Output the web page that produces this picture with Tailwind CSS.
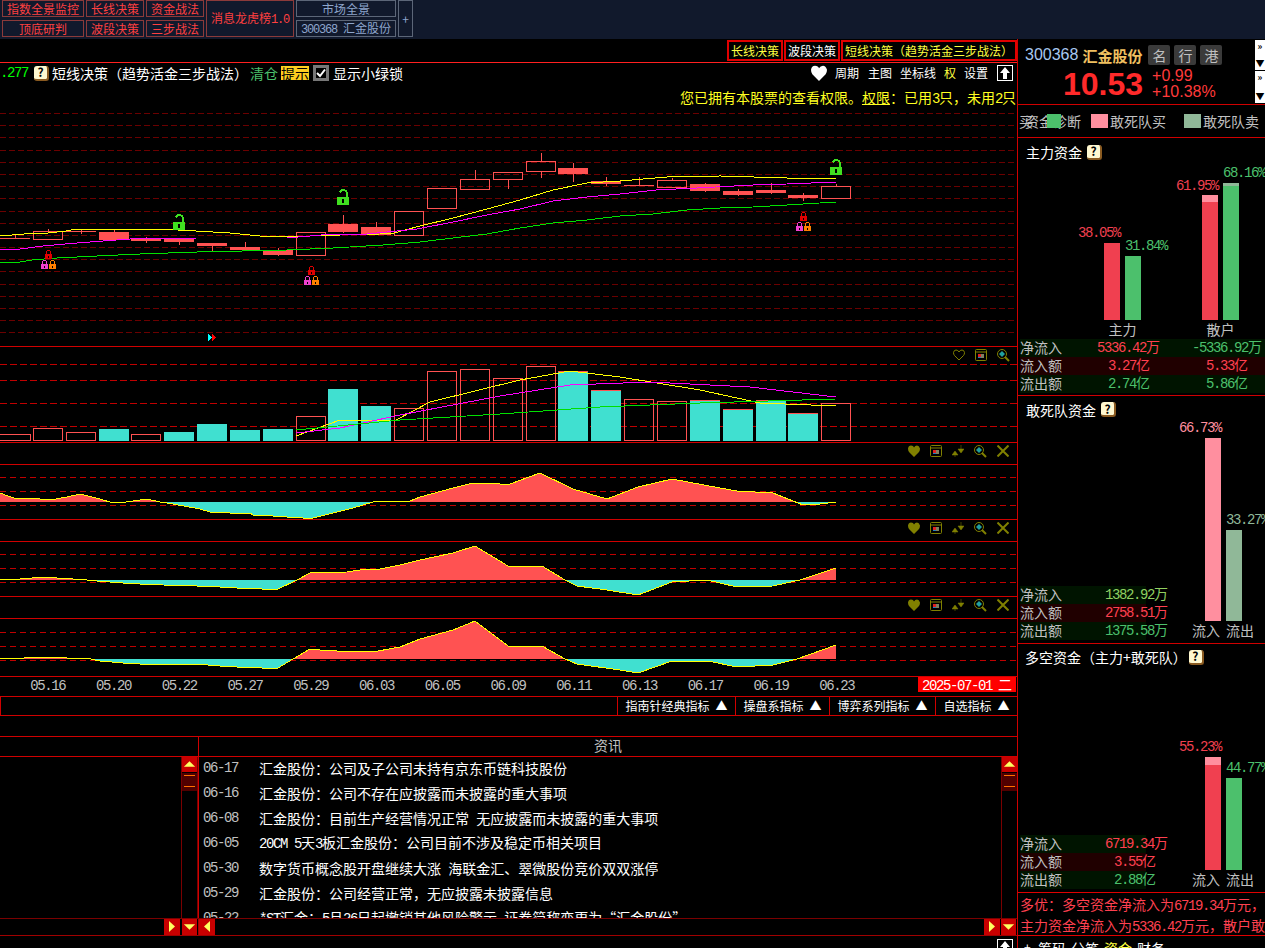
<!DOCTYPE html>
<html lang="zh">
<head>
<meta charset="utf-8">
<title>短线决策</title>
<script src="https://cdn.jsdelivr.net/npm/@tailwindcss/browser@4"></script>
</head>
<body class="bg-black">
<svg width="0" height="0" class="absolute">
  <defs>
    <symbol id="lock" viewBox="0 0 7 9"><path d="M1.5 4V2.2Q1.5 .5 3.5 .5T5.5 2.2V4" fill="none" stroke="currentColor"/><rect x="0" y="4" width="7" height="5" fill="currentColor"/><rect x="3" y="5.5" width="1" height="2" fill="#000"/></symbol>
    <symbol id="open" viewBox="0 0 12 17"><path d="M3 3.5Q4 1 6.5 1T10 4V8" fill="none" stroke="#40e020" stroke-width="2"/><rect x="0" y="8" width="12" height="8" fill="#40e020"/><rect x="5" y="10" width="2" height="4" fill="#000"/></symbol>
    <symbol id="heart" viewBox="0 0 12 12"><path d="M6 12L1 7Q0 5.500 0 3.500Q.5 .5 3 .5T6 2.500Q7 .5 9 .5T12 3.500Q12 5.500 11 7Z" fill="#808000"/></symbol>
    <symbol id="heart-o" viewBox="0 0 12 12"><path d="M6 11L1.500 6.500Q.5 5.500 .5 3.500Q1 1 3 1T6 3Q7 1 9 1T11.500 3.500Q11.500 5.500 10.500 6.500Z" fill="none" stroke="#808000"/></symbol>
    <symbol id="win" viewBox="0 0 12 12"><rect x=".5" y=".5" width="11" height="11" rx="1" fill="none" stroke="#808000"/><path d="M1 3H11" stroke="#808000"/><rect x="3" y="5" width="3" height="4" fill="#e02020"/><rect x="6" y="5" width="3" height="4" fill="#808060"/><rect x="3" y="8" width="3" height="1" fill="#2080c0"/></symbol>
    <symbol id="pin" viewBox="0 0 12 12"><path d="M0 10H6L3 6ZM3 10V12" fill="#808000" stroke="#808000" stroke-width=".5"/><path d="M6 4H12L9 8ZM9 4V0" fill="#808000" stroke="#808000" stroke-width=".5"/></symbol>
    <symbol id="mag" viewBox="0 0 13 13"><circle cx="5" cy="5" r="4.500" fill="none" stroke="#808000"/><path d="M5 2L8 5L5 8L2 5Z" fill="#20a0a0"/><path d="M8 8L12 12" stroke="#808000" stroke-width="2"/></symbol>
    <symbol id="x" viewBox="0 0 12 12"><path d="M.5 .5L11.500 11.500M11.500 .5L.5 11.500" stroke="#808000" stroke-width="2"/></symbol>
    <symbol id="tri-u" viewBox="0 0 16 15"><path d="M2 10L8 4L14 10Z" fill="#ffff60"/></symbol>
    <symbol id="tri-d" viewBox="0 0 16 15"><path d="M2 5L8 11L14 5Z" fill="#ffff60"/></symbol>
    <symbol id="tri-r" viewBox="0 0 16 15"><path d="M5 2L11 7.500L5 13Z" fill="#ffff60"/></symbol>
    <symbol id="tri-l" viewBox="0 0 16 15"><path d="M11 2L5 7.500L11 13Z" fill="#ffff60"/></symbol>
  </defs>
</svg>

<div class="w-[1265px] h-[948px] overflow-hidden flex flex-col bg-black font-['Noto_Sans_CJK_SC',sans-serif] text-[14px] leading-none text-white">

  <!-- top bar -->
  <div class="h-[39px] shrink-0 bg-[#11192c] pl-[2px] grid grid-cols-[82px_58px_58px_88px_100px_15px] grid-rows-[17px_17px] gap-x-[2px] gap-y-[3px] text-[12px] justify-start">
    <div class="border border-[#8c3a3a] flex items-center justify-center text-[#ff4040]">指数全景监控</div>
    <div class="border border-[#8c3a3a] flex items-center justify-center text-[#ff4040]">长线决策</div>
    <div class="border border-[#8c3a3a] flex items-center justify-center text-[#ff4040]">资金战法</div>
    <div class="row-span-2 border border-[#8c3a3a] flex items-center justify-center text-[#ff4040]"><span>消息龙虎榜<span class="font-['Liberation_Mono'] tracking-[-1.2px]">1.0</span></span></div>
    <div class="border border-[#5c6678] flex items-center justify-center text-[#8ea6cc]">市场全景</div>
    <div class="row-span-2 border border-[#5c6678] flex items-center justify-center text-[#8ea6cc]">+</div>
    <div class="border border-[#8c3a3a] flex items-center justify-center text-[#ff4040]">顶底研判</div>
    <div class="border border-[#8c3a3a] flex items-center justify-center text-[#ff4040]">波段决策</div>
    <div class="border border-[#8c3a3a] flex items-center justify-center text-[#ff4040]">三步战法</div>
    <div class="border border-[#5c6678] flex items-center justify-center text-[#8ea6cc]"><span><span class="font-['Liberation_Mono'] tracking-[-1.2px] mr-[6px]">300368</span>汇金股份</span></div>
  </div>

  <div class="flex h-[909px] shrink-0">
    <!-- left column -->
    <div class="w-[1018px] shrink-0 border-r border-[#d00000] flex flex-col">

      <div class="h-[24px] shrink-0 border-b border-[#ff2020] flex justify-end items-start pt-[1px] text-[12px]">
        <div class="h-[21px] w-[56px] border-2 border-[#e00000] flex items-center justify-center text-[#ffff40]">长线决策</div>
        <div class="h-[21px] w-[56px] ml-[1px] border-2 border-[#e00000] flex items-center justify-center text-white">波段决策</div>
        <div class="h-[21px] w-[176px] ml-[1px] border-2 border-[#e00000] flex items-center justify-center text-[#ffff40]">短线决策（趋势活金三步战法）</div>
      </div>

      <!-- main chart -->
      <div class="relative h-[284px] shrink-0 border-b border-[#d00000]">
        <svg class="absolute top-0 left-0" width="1017" height="283" viewBox="0 63 1017 283" fill="none" shape-rendering="crispEdges">
          <path d="M0 113.500H1017M0 125.500H1017M0 137.500H1017M0 150.500H1017M0 162.500H1017M0 174.500H1017M0 186.500H1017M0 198.500H1017M0 211.500H1017M0 223.500H1017M0 235.500H1017M0 247.500H1017M0 259.500H1017M0 271.500H1017M0 284.500H1017M0 296.500H1017M0 308.500H1017M0 320.500H1017M0 332.500H1017" stroke="#6a0000" stroke-dasharray="6 3"/>
          <g stroke="#ff5252">
            <path d="M15.500 234V238M48.500 229V231M81.500 229V234M114.500 229V241M146.500 237V243M179.500 239V245M212.500 243V252M245.500 242V251M278.500 248V256M343.500 215V233M376.500 222V235M475.500 170V179M508.500 179V189M541.500 153V161M541.500 171V178M573.500 163V182M606.500 177V186M639.500 177V185M672.500 178V180M705.500 183V192M738.500 189V196M771.500 183V194M803.500 193V201M836.500 184V186"/>
            <path d="M0 238.500H30M66 231.500H96M624 185.500H654"/>
            <rect x="33.500" y="231.500" width="29" height="8"/>
            <rect x="296.500" y="232.500" width="29" height="23"/>
            <rect x="394.500" y="211.500" width="29" height="24"/>
            <rect x="427.500" y="188.500" width="29" height="20"/>
            <rect x="460.500" y="179.500" width="29" height="10"/>
            <rect x="493.500" y="172.500" width="29" height="7"/>
            <rect x="526.500" y="161.500" width="29" height="10"/>
            <rect x="657.500" y="180.500" width="29" height="7"/>
            <rect x="821.500" y="186.500" width="29" height="12"/>
          </g>
          <g fill="#ff5252">
            <rect x="99" y="232" width="30" height="8"/>
            <rect x="131" y="239" width="30" height="2"/>
            <rect x="164" y="239" width="30" height="3"/>
            <rect x="197" y="243" width="30" height="3"/>
            <rect x="230" y="247" width="30" height="3"/>
            <rect x="263" y="250" width="30" height="5"/>
            <rect x="328" y="224" width="30" height="8"/>
            <rect x="361" y="227" width="30" height="8"/>
            <rect x="558" y="168" width="30" height="6"/>
            <rect x="591" y="181" width="30" height="3"/>
            <rect x="690" y="184" width="30" height="7"/>
            <rect x="723" y="191" width="30" height="4"/>
            <rect x="756" y="190" width="30" height="3"/>
            <rect x="788" y="195" width="30" height="3"/>
          </g>
          <polyline points="0,236 24,234 48,233 66,231 76,229 160,229 196,231 230,233 260,236 285,237 310,236 340,235 380,234 394,233 420,226 453,218 487,209 520,200 553,190 587,183 620,181 667,177 720,176 787,178 836,178" stroke="#ffff00"/>
          <polyline points="0,250 20,249 43,246 65,244 90,242 130,239 197,238 287,238 333,234 367,234 417,229 453,222 487,215 520,209 553,201 587,197 620,194 656,190 697,188 753,185 787,184 836,182" stroke="#ff00ff"/>
          <polyline points="0,262 20,262 32,260 57,258 97,256 140,254 197,252 287,250 333,248 383,245 420,242 453,238 487,234 520,228 553,223 587,220 620,216 653,214 687,210 720,208 753,207 787,205 836,202" stroke="#00e000"/>
          <use href="#open" x="173" y="214" width="12" height="17"/>
          <use href="#open" x="337" y="189" width="12" height="17"/>
          <use href="#open" x="830" y="159" width="12" height="17"/>
          <use href="#lock" x="45" y="250" width="7" height="9" color="#e00000"/>
          <use href="#lock" x="41" y="260" width="7" height="9" color="#f040d0"/>
          <use href="#lock" x="49" y="260" width="7" height="9" color="#ff8000"/>
          <use href="#lock" x="308" y="266" width="7" height="9" color="#e00000"/>
          <use href="#lock" x="304" y="276" width="7" height="9" color="#f040d0"/>
          <use href="#lock" x="312" y="276" width="7" height="9" color="#ff8000"/>
          <use href="#lock" x="800" y="212" width="7" height="9" color="#e00000"/>
          <use href="#lock" x="796" y="222" width="7" height="9" color="#f040d0"/>
          <use href="#lock" x="804" y="222" width="7" height="9" color="#ff8000"/>
          <path d="M208 334L212 337.500L208 341Z" fill="#00ffff"/>
          <path d="M212 334L216 337.500L212 341Z" fill="#ff0000"/>
        </svg>

        <div class="relative flex items-center h-[20px]">
          <span class="font-['Liberation_Mono'] tracking-[-1.4px] text-[#00ff00] w-[34px]">.277</span>
          <span class="w-[15px] h-[15px] rounded-[3px] bg-[#fff8d0] border-r-2 border-b-2 border-[#8a5a20] text-black font-bold text-[12px] flex items-center justify-center">?</span>
          <span class="ml-[3px]">短线决策（趋势活金三步战法）</span>
          <span class="ml-[2px] text-[#4cc06c]">清仓</span>
          <span class="ml-[3px] bg-[#ffd020] text-black h-[14px] w-[28px] flex items-center justify-center">提示</span>
          <span class="ml-[4px] w-[16px] h-[16px] border-[3px] border-[#777] bg-black flex items-center justify-center">
            <svg width="10" height="10" viewBox="0 0 10 10"><path d="M1 5L4 8L9 1.500" fill="none" stroke="#fff" stroke-width="2"/></svg>
          </span>
          <span class="ml-[4px]">显示小绿锁</span>
          <div class="ml-auto mr-[4px] flex items-center text-[12px]">
            <svg width="18" height="16" viewBox="0 0 12 12"><path d="M6 12L1 7Q0 5.500 0 3.500Q.5 .5 3 .5T6 2.500Q7 .5 9 .5T12 3.500Q12 5.500 11 7Z" fill="#fff"/></svg>
            <span class="ml-[7px]">周期</span>
            <span class="ml-[9px]">主图</span>
            <span class="ml-[8px]">坐标线</span>
            <span class="ml-[8px] text-[#ffff40]">权</span>
            <span class="ml-[8px]">设置</span>
            <span class="ml-[9px] w-[16px] h-[16px] border border-white flex items-center justify-center">
              <svg width="10" height="12" viewBox="0 0 10 12"><path d="M5 0L10 6H7V12H3V6H0Z" fill="#fff"/></svg>
            </span>
          </div>
        </div>
        <div class="relative mt-[5px] h-[20px] pr-[1px] flex items-center justify-end text-[#ffff20] whitespace-nowrap"><span>您已拥有本股票的查看权限。<span class="underline">权限</span>：已用<span class="font-['Liberation_Mono'] tracking-[-1.4px]">3</span>只，未用<span class="font-['Liberation_Mono'] tracking-[-1.4px]">2</span>只</span></div>
      </div>

      <!-- volume pane -->
      <div class="relative h-[96px] shrink-0 border-b border-[#d00000]">
        <svg class="absolute top-0 left-0" width="1017" height="95" viewBox="0 347 1017 95" fill="none" shape-rendering="crispEdges">
          <path d="M0 364.500H1017M0 380.500H1017M0 403.500H1017M0 426.500H1017" stroke="#c00000" stroke-dasharray="7 3"/>
          <g fill="#40e0d0">
            <rect x="99" y="429" width="30" height="12"/>
            <rect x="164" y="432" width="30" height="9"/>
            <rect x="197" y="424" width="30" height="17"/>
            <rect x="230" y="430" width="30" height="11"/>
            <rect x="263" y="429" width="30" height="12"/>
            <rect x="328" y="389" width="30" height="52"/>
            <rect x="361" y="406" width="30" height="35"/>
            <rect x="558" y="372" width="30" height="69"/>
            <rect x="591" y="391" width="30" height="50"/>
            <rect x="690" y="401" width="30" height="40"/>
            <rect x="723" y="410" width="30" height="31"/>
            <rect x="756" y="401" width="30" height="40"/>
            <rect x="788" y="414" width="30" height="27"/>
          </g>
          <g stroke="#ff5252">
            <rect x="-1" y="434.500" width="31" height="6"/>
            <rect x="33.500" y="428.500" width="29" height="12"/>
            <rect x="66.500" y="432.500" width="29" height="8"/>
            <rect x="131.500" y="434.500" width="29" height="6"/>
            <rect x="296.500" y="416.500" width="29" height="24"/>
            <rect x="394.500" y="408.500" width="29" height="32"/>
            <rect x="427.500" y="371.500" width="29" height="69"/>
            <rect x="460.500" y="369.500" width="29" height="71"/>
            <rect x="493.500" y="378.500" width="29" height="62"/>
            <rect x="526.500" y="366.500" width="29" height="74"/>
            <rect x="624.500" y="399.500" width="29" height="41"/>
            <rect x="657.500" y="401.500" width="29" height="39"/>
            <rect x="821.500" y="403.500" width="29" height="37"/>
            <path d="M558 371.500H588M591 390.500H621M690 400.500H720M723 409.500H753M756 400.500H786M788 413.500H818"/>
          </g>
          <polyline points="296,436 340,420 396,420 430,402 520,380 570,371 620,377 700,390 760,403 836,406" stroke="#ffff00"/>
          <polyline points="296,433 340,428 400,415 500,396 570,385 650,382 750,387 836,397" stroke="#ff00ff"/>
          <polyline points="296,430 400,420 500,414 600,407 700,403 836,399" stroke="#00e000"/>
        </svg>
        <div class="relative flex justify-end gap-[10px] pr-[7px] pt-[2px]">
          <svg width="12" height="12"><use href="#heart-o" width="12" height="12"/></svg>
          <svg width="12" height="12"><use href="#win" width="12" height="12"/></svg>
          <svg width="13" height="13"><use href="#mag" width="13" height="13"/></svg>
        </div>
      </div>

      <!-- indicator A -->
      <div class="h-[22px] shrink-0 border-b border-[#d00000] flex justify-end items-start pt-[2px] gap-[10px] pr-[8px]">
        <svg width="12" height="12"><use href="#heart" width="12" height="12"/></svg>
        <svg width="12" height="12"><use href="#win" width="12" height="12"/></svg>
        <svg width="12" height="12"><use href="#pin" width="12" height="12"/></svg>
        <svg width="13" height="13"><use href="#mag" width="13" height="13"/></svg>
        <svg width="12" height="12"><use href="#x" width="12" height="12"/></svg>
      </div>
      <div class="h-[55px] shrink-0 border-b border-[#d00000]">
        <svg class="block" width="1017" height="54" viewBox="0 465 1017 54" fill="none" shape-rendering="crispEdges">
          <defs>
            <clipPath id="au"><rect x="0" y="465" width="1017" height="37"/></clipPath>
            <clipPath id="ad"><rect x="0" y="502" width="1017" height="17"/></clipPath>
            <polygon id="pa" points="0,502 0,493 8,496 14,498 24,498 40,499 50,500 67,497 80,494 88,496 100,499 113,503 126,502 133,501 147,499 160,502 173,504 200,509 210,512 230,513 250,513 253,515 273,516 287,517 303,518 313,518 333,513 353,508 373,502 393,501 410,501 420,497 453,488 473,483 483,483 500,484 510,484 540,473 573,489 607,499 638,487 672,479 720,488 737,491 773,493 793,501 803,505 820,504 836,502"/>
          </defs>
          <path d="M0 477.500H1017M0 491.500H1017M0 505.500H1017" stroke="#c00000" stroke-dasharray="6 4"/>
          <use href="#pa" fill="#ff5252" clip-path="url(#au)"/>
          <use href="#pa" fill="#40e0d0" clip-path="url(#ad)"/>
          <polyline points="0,493 8,496 14,498 24,498 40,499 50,500 67,497 80,494 88,496 100,499 113,503 126,502 133,501 147,499 160,502 173,504 200,509 210,512 230,513 250,513 253,515 273,516 287,517 303,518 313,518 333,513 353,508 373,502 393,501 410,501 420,497 453,488 473,483 483,483 500,484 510,484 540,473 573,489 607,499 638,487 672,479 720,488 737,491 773,493 793,501 803,505 820,504 836,502" stroke="#ffff00"/>
        </svg>
      </div>

      <!-- indicator B -->
      <div class="h-[22px] shrink-0 border-b border-[#d00000] flex justify-end items-start pt-[2px] gap-[10px] pr-[8px]">
        <svg width="12" height="12"><use href="#heart" width="12" height="12"/></svg>
        <svg width="12" height="12"><use href="#win" width="12" height="12"/></svg>
        <svg width="12" height="12"><use href="#pin" width="12" height="12"/></svg>
        <svg width="13" height="13"><use href="#mag" width="13" height="13"/></svg>
        <svg width="12" height="12"><use href="#x" width="12" height="12"/></svg>
      </div>
      <div class="h-[55px] shrink-0 border-b border-[#d00000]">
        <svg class="block" width="1017" height="54" viewBox="0 542 1017 54" fill="none" shape-rendering="crispEdges">
          <defs>
            <clipPath id="bu"><rect x="0" y="542" width="1017" height="38"/></clipPath>
            <clipPath id="bd"><rect x="0" y="580" width="1017" height="16"/></clipPath>
            <polygon id="pb" points="0,580 0,579 7,580 20,579 32,578 43,577 57,578 73,579 87,580 97,581 110,582 123,583 140,584 163,585 197,586 220,587 237,588 262,589 278,589 297,580 310,573 347,572 360,570 380,569 400,565 420,560 453,553 475,546 508,566 542,566 565,580 577,586 607,590 638,595 672,582 707,580 737,587 773,586 800,580 836,568 836,580"/>
          </defs>
          <path d="M0 554.500H1017M0 568.500H1017M0 582.500H1017" stroke="#c00000" stroke-dasharray="6 4"/>
          <use href="#pb" fill="#ff5252" clip-path="url(#bu)"/>
          <use href="#pb" fill="#40e0d0" clip-path="url(#bd)"/>
          <polyline points="0,579 7,580 20,579 32,578 43,577 57,578 73,579 87,580 97,581 110,582 123,583 140,584 163,585 197,586 220,587 237,588 262,589 278,589 297,580 310,573 347,572 360,570 380,569 400,565 420,560 453,553 475,546 508,566 542,566 565,580 577,586 607,590 638,595 672,582 707,580 737,587 773,586 800,580 836,568" stroke="#ffff00"/>
        </svg>
      </div>

      <!-- indicator C -->
      <div class="h-[22px] shrink-0 border-b border-[#d00000] flex justify-end items-start pt-[2px] gap-[10px] pr-[8px]">
        <svg width="12" height="12"><use href="#heart" width="12" height="12"/></svg>
        <svg width="12" height="12"><use href="#win" width="12" height="12"/></svg>
        <svg width="12" height="12"><use href="#pin" width="12" height="12"/></svg>
        <svg width="13" height="13"><use href="#mag" width="13" height="13"/></svg>
        <svg width="12" height="12"><use href="#x" width="12" height="12"/></svg>
      </div>
      <div class="h-[58px] shrink-0 border-b border-[#d00000]">
        <svg class="block" width="1017" height="57" viewBox="0 619 1017 57" fill="none" shape-rendering="crispEdges">
          <defs>
            <clipPath id="cu"><rect x="0" y="619" width="1017" height="40"/></clipPath>
            <clipPath id="cd"><rect x="0" y="659" width="1017" height="17"/></clipPath>
            <polygon id="pc" points="0,659 0,658 8,659 24,658 40,657 65,657 67,658 86,658 100,661 123,663 140,664 195,664 220,666 237,667 262,668 278,668 293,659 310,649 320,650 337,651 378,651 400,647 420,639 453,630 475,621 508,646 542,646 565,659 577,664 620,670 638,673 672,661 708,661 737,667 773,665 797,659 836,645 836,659"/>
          </defs>
          <path d="M0 632.500H1017M0 646.500H1017M0 660.500H1017" stroke="#c00000" stroke-dasharray="6 4"/>
          <use href="#pc" fill="#ff5252" clip-path="url(#cu)"/>
          <use href="#pc" fill="#40e0d0" clip-path="url(#cd)"/>
          <polyline points="0,658 8,659 24,658 40,657 65,657 67,658 86,658 100,661 123,663 140,664 195,664 220,666 237,667 262,668 278,668 293,659 310,649 320,650 337,651 378,651 400,647 420,639 453,630 475,621 508,646 542,646 565,659 577,664 620,670 638,673 672,661 708,661 737,667 773,665 797,659 836,645" stroke="#ffff00"/>
        </svg>
      </div>

      <!-- date axis -->
      <div class="h-[20px] shrink-0 border-b border-[#d00000] flex items-center pl-[15px] pb-[2px] font-['Liberation_Mono'] tracking-[-1.4px] text-[#c0c0c0]">
        <span class="w-[65.750px] text-center">05.16</span>
        <span class="w-[65.750px] text-center">05.20</span>
        <span class="w-[65.750px] text-center">05.22</span>
        <span class="w-[65.750px] text-center">05.27</span>
        <span class="w-[65.750px] text-center">05.29</span>
        <span class="w-[65.750px] text-center">06.03</span>
        <span class="w-[65.750px] text-center">06.05</span>
        <span class="w-[65.750px] text-center">06.09</span>
        <span class="w-[65.750px] text-center">06.11</span>
        <span class="w-[65.750px] text-center">06.13</span>
        <span class="w-[65.750px] text-center">06.17</span>
        <span class="w-[65.750px] text-center">06.19</span>
        <span class="w-[65.750px] text-center">06.23</span>
        <span class="ml-auto mr-[1px] mb-[2px] w-[98px] h-[15px] bg-[#ff0000] text-white flex items-center justify-center"><span>2025-07-01<span class="font-['Noto_Sans_CJK_SC'] tracking-normal ml-[6px]">二</span></span></span>
      </div>

      <!-- indicator menu -->
      <div class="h-[19px] shrink-0 border-b border-[#d00000] border-l flex justify-end text-[12px]">
        <span class="w-[118px] border-l border-[#d00000] flex items-center justify-center gap-[6px]">指南针经典指标 <span>▲</span></span>
        <span class="w-[94px] border-l border-[#d00000] flex items-center justify-center gap-[6px]">操盘系指标 <span>▲</span></span>
        <span class="w-[106px] border-l border-[#d00000] flex items-center justify-center gap-[6px]">博弈系列指标 <span>▲</span></span>
        <span class="w-[82px] border-l border-[#d00000] flex items-center justify-center gap-[6px]">自选指标 <span>▲</span></span>
      </div>

      <div class="h-[21px] border-b border-[#d00000] shrink-0"></div>

      <!-- news header -->
      <div class="h-[20px] shrink-0 border-b border-[#d00000] flex">
        <div class="w-[199px] border-r border-[#d00000]"></div>
        <div class="flex-1 flex items-center justify-center pb-[3px] text-[#c0c0c0]">资讯</div>
      </div>

      <!-- news -->
      <div class="h-[162px] shrink-0 border-b border-[#7a0000] flex overflow-hidden">
        <div class="w-[181px] shrink-0"></div>
        <div class="w-[17px] shrink-0 border-l border-r border-[#7a0000] flex flex-col">
          <svg class="block bg-[#c80000]" width="15" height="15"><use href="#tri-u" width="15" height="15"/></svg>
          <div class="h-[18px] mt-[1px] bg-[#500000] flex flex-col gap-[10px] pt-[2px] px-[2px]"><div class="h-px bg-[#ff7000]"></div><div class="h-px bg-[#ff7000]"></div></div>
        </div>
        <div class="w-[1px] shrink-0 bg-[#d00000]"></div>
        <div class="w-[802px] shrink-0 overflow-hidden -mt-[2px] [word-spacing:4px]">
          <div class="h-[25px] flex items-center whitespace-nowrap"><span class="w-[60px] shrink-0 pl-[4px] font-['Liberation_Mono'] tracking-[-1.4px] text-[#c0c0c0]">06-17</span><span>汇金股份：公司及子公司未持有京东币链科技股份</span></div>
          <div class="h-[25px] flex items-center whitespace-nowrap"><span class="w-[60px] shrink-0 pl-[4px] font-['Liberation_Mono'] tracking-[-1.4px] text-[#c0c0c0]">06-16</span><span>汇金股份：公司不存在应披露而未披露的重大事项</span></div>
          <div class="h-[25px] flex items-center whitespace-nowrap"><span class="w-[60px] shrink-0 pl-[4px] font-['Liberation_Mono'] tracking-[-1.4px] text-[#c0c0c0]">06-08</span><span>汇金股份：目前生产经营情况正常 无应披露而未披露的重大事项</span></div>
          <div class="h-[25px] flex items-center whitespace-nowrap"><span class="w-[60px] shrink-0 pl-[4px] font-['Liberation_Mono'] tracking-[-1.4px] text-[#c0c0c0]">06-05</span><span><span class="font-['Liberation_Mono'] tracking-[-1.4px] [word-spacing:0px]">20CM 5</span>天<span class="font-['Liberation_Mono'] tracking-[-1.4px]">3</span>板汇金股份：公司目前不涉及稳定币相关项目</span></div>
          <div class="h-[25px] flex items-center whitespace-nowrap"><span class="w-[60px] shrink-0 pl-[4px] font-['Liberation_Mono'] tracking-[-1.4px] text-[#c0c0c0]">05-30</span><span>数字货币概念股开盘继续大涨 海联金汇、翠微股份竞价双双涨停</span></div>
          <div class="h-[25px] flex items-center whitespace-nowrap"><span class="w-[60px] shrink-0 pl-[4px] font-['Liberation_Mono'] tracking-[-1.4px] text-[#c0c0c0]">05-29</span><span>汇金股份：公司经营正常，无应披露未披露信息</span></div>
          <div class="h-[25px] flex items-center whitespace-nowrap"><span class="w-[60px] shrink-0 pl-[4px] font-['Liberation_Mono'] tracking-[-1.4px] text-[#c0c0c0]">05-22</span><span><span class="font-['Liberation_Mono'] tracking-[-1.4px]">*ST</span>汇金：<span class="font-['Liberation_Mono'] tracking-[-1.4px]">5</span>月<span class="font-['Liberation_Mono'] tracking-[-1.4px]">26</span>日起撤销其他风险警示 证券简称变更为“汇金股份”</span></div>
        </div>
        <div class="w-[17px] shrink-0 border-l border-r border-[#7a0000] flex flex-col">
          <svg class="block bg-[#c80000]" width="15" height="15"><use href="#tri-u" width="15" height="15"/></svg>
          <div class="h-[18px] mt-[1px] bg-[#500000] flex flex-col gap-[10px] pt-[2px] px-[2px]"><div class="h-px bg-[#ff7000]"></div><div class="h-px bg-[#ff7000]"></div></div>
        </div>
      </div>

      <!-- horizontal scroll -->
      <div class="h-[17px] shrink-0 border-b border-[#a00000] flex items-start">
        <div class="w-[164px] shrink-0"></div>
        <svg class="block bg-[#c80000] shrink-0" width="16" height="16"><use href="#tri-r" width="16" height="15"/></svg>
        <svg class="block bg-[#c80000] ml-[2px] shrink-0" width="15" height="16"><use href="#tri-d" width="15" height="15"/></svg>
        <div class="w-[1px] h-[16px] ml-[1px] bg-[#a00000] shrink-0"></div>
        <svg class="block bg-[#c80000] shrink-0" width="16" height="16"><use href="#tri-l" width="16" height="15"/></svg>
        <div class="flex-1"></div>
        <svg class="block bg-[#c80000] shrink-0" width="16" height="16"><use href="#tri-r" width="16" height="15"/></svg>
        <svg class="block bg-[#c80000] ml-[1px] mr-[1px] shrink-0" width="15" height="16"><use href="#tri-d" width="15" height="15"/></svg>
      </div>

      <div class="h-[12px] shrink-0 overflow-hidden flex justify-end pr-[4px] pt-[3px]">
        <span class="w-[16px] h-[16px] shrink-0 border border-white flex items-center justify-center">
          <svg width="10" height="12" viewBox="0 0 10 12"><path d="M5 0L10 6H7V12H3V6H0Z" fill="#fff"/></svg>
        </span>
      </div>
    </div>

    <!-- right column -->
    <div class="w-[247px] shrink-0 flex flex-col">

      <!-- quote header -->
      <div class="relative h-[66px] shrink-0 border-b border-[#d00000] pl-[7px]">
        <div class="flex items-center h-[31px] pt-[1px]">
          <span class="font-['Liberation_Sans'] text-[16px] text-[#a8c8f0]">300368</span>
          <span class="ml-[4px] text-[15px] font-bold text-[#f0c060]">汇金股份</span>
          <span class="ml-[6px] w-[22px] h-[20px] rounded-[2px] bg-[#3a3a3a] text-[#c0c0c0] flex items-center justify-center">名</span>
          <span class="ml-[4px] w-[22px] h-[20px] rounded-[2px] bg-[#3a3a3a] text-[#c0c0c0] flex items-center justify-center">行</span>
          <span class="ml-[4px] w-[22px] h-[20px] rounded-[2px] bg-[#3a3a3a] text-[#c0c0c0] flex items-center justify-center">港</span>
        </div>
        <div class="flex items-center pl-[38px] mt-[-2px]">
          <span class="font-['Liberation_Sans'] font-bold text-[32px] text-[#ff2a2a]">10.53</span>
          <div class="ml-[9px] flex flex-col gap-[0px] font-['Liberation_Sans'] text-[16px] leading-[16px] text-[#ff3a3a]">
            <span>+0.99</span>
            <span>+10.38%</span>
          </div>
        </div>
        <div class="absolute right-0 top-[1px] w-[10px] h-[30px] bg-white text-black text-[9px] font-bold flex flex-col items-center justify-between py-[2px]"><span>»</span><span>▼</span></div>
        <div class="absolute right-0 top-[32px] w-[10px] h-[32px] bg-white text-black text-[9px] font-bold flex flex-col items-center justify-between py-[2px]"><span>»</span><span>▼</span></div>
      </div>

      <!-- legend -->
      <div class="relative h-[33px] shrink-0 border-b border-[#d00000] flex items-center pl-[7px] text-[#c0c0c0]">
        <span>资金诊断</span>
        <span class="ml-[10px] w-[17px] h-[14px] bg-[#ff8f9f]"></span>
        <span class="ml-[2px]">敢死队买</span>
        <span class="ml-[18px] w-[17px] h-[14px] bg-[#90b898]"></span>
        <span class="ml-[2px]">敢死队卖</span>
        <span class="absolute left-[1px] top-[9px]">买</span>
        <span class="absolute left-[29px] top-[9px] w-[14px] h-[14px] bg-[#4cc06c]"></span>
      </div>

      <!-- main money -->
      <div class="h-[258px] shrink-0 border-b border-[#d00000] flex flex-col">
        <div class="h-[27px] shrink-0 flex items-center pl-[8px] pt-[1px]">
          <span>主力资金</span>
          <span class="ml-[5px] w-[15px] h-[15px] rounded-[3px] bg-[#fff8d0] border-r-2 border-b-2 border-[#8a5a20] text-black font-bold text-[12px] flex items-center justify-center">?</span>
        </div>
        <div class="h-[174px] shrink-0 flex items-end pl-[86px]">
          <div class="w-[37px] flex flex-col items-center">
            <div class="flex items-end gap-[5px] w-[37px]">
              <div class="w-[16px] flex flex-col items-end">
                <span class="shrink-0 whitespace-nowrap font-['Liberation_Mono'] tracking-[-1.4px] text-[#f04050] h-[16px] leading-[16px] mb-[2px]">38.05%</span>
                <div class="w-[16px] h-[77px] bg-[#f04050] shrink-0"></div>
              </div>
              <div class="w-[16px] flex flex-col items-start">
                <span class="shrink-0 whitespace-nowrap font-['Liberation_Mono'] tracking-[-1.4px] text-[#4cc06c] h-[16px] leading-[16px] mb-[2px]">31.84%</span>
                <div class="w-[16px] h-[64px] bg-[#4cc06c] shrink-0"></div>
              </div>
            </div>
            <span class="h-[19px] pb-[2px] flex items-center text-[#c0c0c0] whitespace-nowrap">主力</span>
          </div>
          <div class="w-[37px] ml-[61px] flex flex-col items-center">
            <div class="flex items-end gap-[5px] w-[37px]">
              <div class="w-[16px] flex flex-col items-end">
                <span class="shrink-0 whitespace-nowrap font-['Liberation_Mono'] tracking-[-1.4px] text-[#f04050] h-[16px] leading-[16px] mb-[1px]">61.95%</span>
                <div class="w-[16px] h-[7px] bg-[#ff8f9f] shrink-0"></div>
                <div class="w-[16px] h-[118px] bg-[#f04050] shrink-0"></div>
              </div>
              <div class="w-[16px] flex flex-col items-start">
                <span class="shrink-0 whitespace-nowrap font-['Liberation_Mono'] tracking-[-1.4px] text-[#4cc06c] h-[16px] leading-[16px] mb-[2px]">68.16%</span>
                <div class="w-[16px] h-[3px] bg-[#90b898] shrink-0"></div>
                <div class="w-[16px] h-[134px] bg-[#4cc06c] shrink-0"></div>
              </div>
            </div>
            <span class="h-[19px] pb-[2px] flex items-center text-[#c0c0c0] whitespace-nowrap">散户</span>
          </div>
        </div>
        <div class="pl-[2px] flex flex-col">
          <div class="h-[18px] pb-[2px] bg-[#001400] flex items-center text-[#c0c0c0]"><span class="w-[77px]">净流入</span><span class="w-[62px] text-center font-['Liberation_Mono'] tracking-[-1.4px] text-[#ff4050] whitespace-nowrap">5336.42<span class="font-['Noto_Sans_CJK_SC'] tracking-normal">万</span></span><span class="ml-[32px] w-[72px] text-center font-['Liberation_Mono'] tracking-[-1.4px] text-[#4cc06c] whitespace-nowrap">-5336.92<span class="font-['Noto_Sans_CJK_SC'] tracking-normal">万</span></span></div>
          <div class="h-[18px] pb-[2px] bg-[#200000] flex items-center text-[#c0c0c0]"><span class="w-[88px]">流入额</span><span class="w-[42px] font-['Liberation_Mono'] tracking-[-1.4px] text-[#ff4050] whitespace-nowrap">3.27<span class="font-['Noto_Sans_CJK_SC'] tracking-normal">亿</span></span><span class="ml-[56px] w-[42px] font-['Liberation_Mono'] tracking-[-1.4px] text-[#ff4050] whitespace-nowrap">5.33<span class="font-['Noto_Sans_CJK_SC'] tracking-normal">亿</span></span></div>
          <div class="h-[18px] pb-[2px] bg-[#001400] flex items-center text-[#c0c0c0]"><span class="w-[88px]">流出额</span><span class="w-[42px] font-['Liberation_Mono'] tracking-[-1.4px] text-[#4cc06c] whitespace-nowrap">2.74<span class="font-['Noto_Sans_CJK_SC'] tracking-normal">亿</span></span><span class="ml-[56px] w-[42px] font-['Liberation_Mono'] tracking-[-1.4px] text-[#4cc06c] whitespace-nowrap">5.86<span class="font-['Noto_Sans_CJK_SC'] tracking-normal">亿</span></span></div>
        </div>
      </div>

      <!-- dare-to-die money -->
      <div class="h-[248px] shrink-0 border-b border-[#d00000] flex flex-col">
        <div class="h-[24px] shrink-0 flex items-center pl-[8px] pt-[3px]">
          <span>敢死队资金</span>
          <span class="ml-[5px] w-[15px] h-[15px] rounded-[3px] bg-[#fff8d0] border-r-2 border-b-2 border-[#8a5a20] text-black font-bold text-[12px] flex items-center justify-center">?</span>
        </div>
        <div class="flex-1 flex items-end pl-[2px] pb-[3px]">
          <div class="w-[126px] flex flex-col">
            <div class="h-[18px] pb-[2px] bg-[#001400] flex items-center text-[#c0c0c0]"><span class="w-[85px] shrink-0">净流入</span><span class="w-[62px] shrink-0 text-center font-['Liberation_Mono'] tracking-[-1.4px] text-[#90d060] whitespace-nowrap">1382.92<span class="font-['Noto_Sans_CJK_SC'] tracking-normal">万</span></span></div>
            <div class="h-[18px] pb-[2px] bg-[#200000] flex items-center text-[#c0c0c0]"><span class="w-[85px] shrink-0">流入额</span><span class="w-[62px] shrink-0 text-center font-['Liberation_Mono'] tracking-[-1.4px] text-[#ff4050] whitespace-nowrap">2758.51<span class="font-['Noto_Sans_CJK_SC'] tracking-normal">万</span></span></div>
            <div class="h-[18px] pb-[2px] bg-[#001400] flex items-center text-[#c0c0c0]"><span class="w-[85px] shrink-0">流出额</span><span class="w-[62px] shrink-0 text-center font-['Liberation_Mono'] tracking-[-1.4px] text-[#4cc06c] whitespace-nowrap">1375.58<span class="font-['Noto_Sans_CJK_SC'] tracking-normal">万</span></span></div>
          </div>
          <div class="ml-[47px] w-[27px] flex flex-col items-end mr-[6px]">
            <div class="w-[16px] flex flex-col items-end mr-[-1px]">
              <span class="shrink-0 whitespace-nowrap font-['Liberation_Mono'] tracking-[-1.4px] text-[#ff8f9f] h-[16px] leading-[16px] mb-[2px]">66.73%</span>
              <div class="w-[16px] h-[183px] bg-[#ff8f9f] shrink-0"></div>
            </div>
            <span class="h-[19px] pb-[2px] flex items-center text-[#c0c0c0] whitespace-nowrap">流入</span>
          </div>
          <div class="w-[27px] flex flex-col items-start">
            <div class="w-[16px] flex flex-col items-start">
              <span class="shrink-0 whitespace-nowrap font-['Liberation_Mono'] tracking-[-1.4px] text-[#90b898] h-[16px] leading-[16px] mb-[2px]">33.27%</span>
              <div class="w-[16px] h-[91px] bg-[#90b898] shrink-0"></div>
            </div>
            <span class="h-[19px] pb-[2px] flex items-center text-[#c0c0c0] whitespace-nowrap">流出</span>
          </div>
        </div>
      </div>

      <!-- long/short money -->
      <div class="h-[249px] shrink-0 border-b border-[#e00000] flex flex-col">
        <div class="h-[26px] shrink-0 flex items-center pl-[7px]">
          <span>多空资金（主力+敢死队）</span>
          <span class="ml-[2px] w-[15px] h-[15px] rounded-[3px] bg-[#fff8d0] border-r-2 border-b-2 border-[#8a5a20] text-black font-bold text-[12px] flex items-center justify-center">?</span>
        </div>
        <div class="flex-1 flex items-end pl-[2px] pb-[3px]">
          <div class="w-[126px] flex flex-col">
            <div class="h-[18px] pb-[2px] bg-[#001400] flex items-center text-[#c0c0c0]"><span class="w-[85px] shrink-0">净流入</span><span class="w-[60px] shrink-0 text-center font-['Liberation_Mono'] tracking-[-1.4px] text-[#ff4050] whitespace-nowrap">6719.34<span class="font-['Noto_Sans_CJK_SC'] tracking-normal">万</span></span></div>
            <div class="h-[18px] pb-[2px] bg-[#200000] flex items-center text-[#c0c0c0]"><span class="w-[85px] shrink-0">流入额</span><span class="w-[60px] shrink-0 text-center font-['Liberation_Mono'] tracking-[-1.4px] text-[#ff4050] whitespace-nowrap">3.55<span class="font-['Noto_Sans_CJK_SC'] tracking-normal">亿</span></span></div>
            <div class="h-[18px] pb-[2px] bg-[#001400] flex items-center text-[#c0c0c0]"><span class="w-[85px] shrink-0">流出额</span><span class="w-[60px] shrink-0 text-center font-['Liberation_Mono'] tracking-[-1.4px] text-[#4cc06c] whitespace-nowrap">2.88<span class="font-['Noto_Sans_CJK_SC'] tracking-normal">亿</span></span></div>
          </div>
          <div class="ml-[47px] w-[27px] flex flex-col items-end mr-[6px]">
            <div class="w-[16px] flex flex-col items-end mr-[-1px]">
              <span class="shrink-0 whitespace-nowrap font-['Liberation_Mono'] tracking-[-1.4px] text-[#f04050] h-[16px] leading-[16px] mb-[2px]">55.23%</span>
              <div class="w-[16px] h-[8px] bg-[#ff8f9f] shrink-0"></div>
              <div class="w-[16px] h-[105px] bg-[#f04050] shrink-0"></div>
            </div>
            <span class="h-[19px] pb-[2px] flex items-center text-[#c0c0c0] whitespace-nowrap">流入</span>
          </div>
          <div class="w-[27px] flex flex-col items-start">
            <div class="w-[16px] flex flex-col items-start">
              <span class="shrink-0 whitespace-nowrap font-['Liberation_Mono'] tracking-[-1.4px] text-[#4cc06c] h-[16px] leading-[16px] mb-[2px]">44.77%</span>
              <div class="w-[16px] h-[92px] bg-[#4cc06c] shrink-0"></div>
            </div>
            <span class="h-[19px] pb-[2px] flex items-center text-[#c0c0c0] whitespace-nowrap">流出</span>
          </div>
        </div>
      </div>

      <!-- message -->
      <div class="h-[43px] shrink-0 border-b border-[#e00000] overflow-hidden pl-[2px] pt-[2px] text-[#ff4050] leading-[19px] whitespace-nowrap">
        <div>多优：多空资金净流入为<span class="font-['Liberation_Mono'] tracking-[-1.4px]">6719.34</span>万元，</div>
        <div>主力资金净流入为<span class="font-['Liberation_Mono'] tracking-[-1.4px]">5336.42</span>万元，散户敢</div>
        <div>死队资金净流入为<span class="font-['Liberation_Mono'] tracking-[-1.4px]">1382.92</span>万元。</div>
      </div>

      <!-- bottom tabs -->
      <div class="h-[12px] shrink-0 overflow-hidden flex items-start pl-[6px] pt-[5px] whitespace-nowrap">
        <span class="text-[12px] w-[14px]">+</span>
        <span>筹码</span>
        <span class="ml-[5px]">分笔</span>
        <span class="ml-[5px] text-[#ffff40]">资金</span>
        <span class="ml-[5px]">财务</span>
      </div>
    </div>
  </div>
</div>
</body>
</html>
